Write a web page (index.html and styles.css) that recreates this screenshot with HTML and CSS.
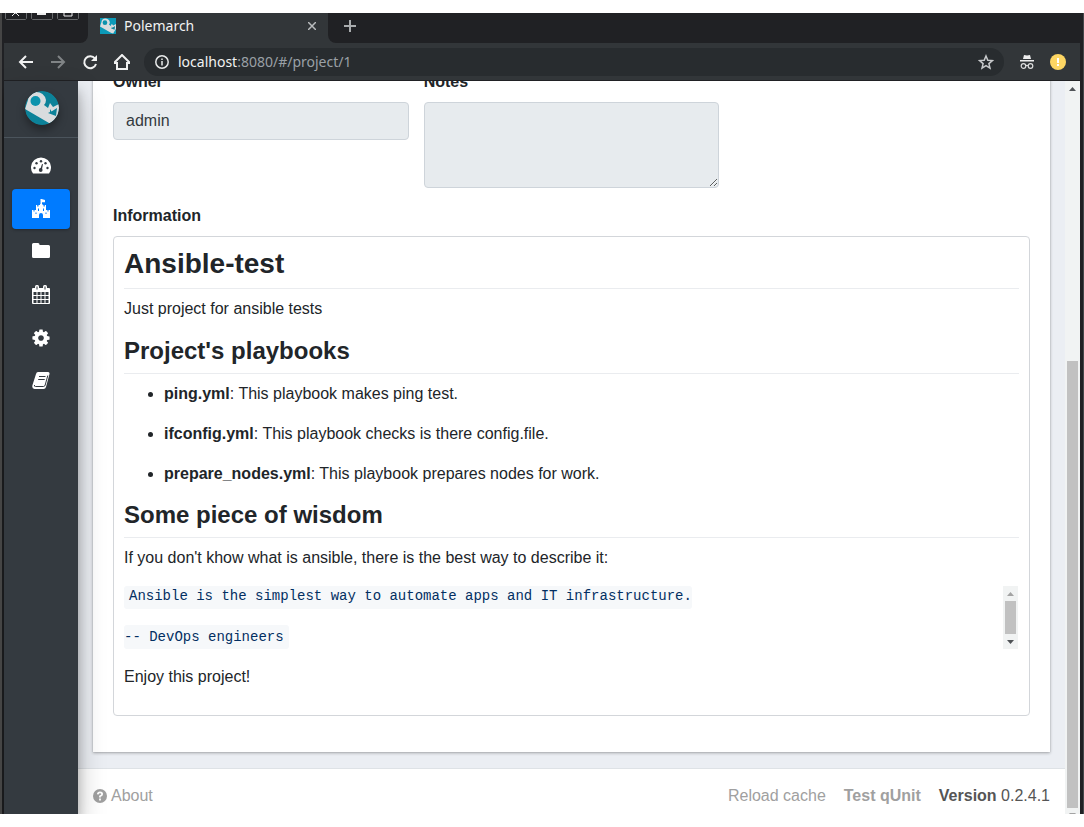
FILE: index.html
```html
<!DOCTYPE html>
<html lang="en">
<head>
<meta charset="utf-8">
<title>Polemarch</title>
<link rel="stylesheet" href="styles.css">
</head>
<body>
<svg class="defs" aria-hidden="true">
  <symbol id="logo-mark" viewBox="0 0 34 34">
    <path d="M0 18 L3 9 Q4 1 11 1 Q19 1 21 9 Q21 12 19 14 L23 17 L25 12 L28 16 L34 13 V23 L28 33 L24 32Z" fill="#d9dcde"/>
    <circle cx="10.500" cy="10" r="5" fill="#0c93ad"/>
    <path d="M25 18l1.500 2.500L32 17l-1 8-8-3 2-1z" fill="#0c8299"/>
  </symbol>
</svg>
<div class="window">
  <header class="chrome">
    <div class="tabstrip">
      <div class="controls">
        <svg width="84" height="8" viewBox="0 0 84 8" fill="none" stroke="#67696b" aria-hidden="true">
          <path d="M1.500 0v5.500l1 1h19l1-1V0M27.500 0v5.500l1 1h19l1-1V0M53.500 0v5.500l1 1h19l1-1V0"/>
          <path d="M8 3l3-3h1l3 3M60 0v3h8V0" stroke="#eee"/><path d="M33 1h9" stroke="#eee" stroke-width="2"/>
        </svg>
      </div>
      <div class="tab">
        <svg class="favicon" viewBox="0 0 34 34" aria-hidden="true"><rect width="34" height="34" fill="#0c9ab8"/><use href="#logo-mark" width="34" height="34"/></svg>
        <span class="tab-title">Polemarch</span>
        <button class="plain" aria-label="Close tab"><svg width="8" height="8" viewBox="0 0 8 8" stroke="#b9bcbe" stroke-width="1.500"><path d="M0 0l8 8M8 0L0 8"/></svg></button>
      </div>
      <button class="plain new-tab" aria-label="New tab"><svg width="12" height="12" viewBox="0 0 12 12" stroke="#a9acae" stroke-width="2"><path d="M6 0v12M0 6h12"/></svg></button>
    </div>
    <div class="toolbar">
      <button class="plain" aria-label="Back"><svg width="16" height="16" viewBox="0 0 16 16" fill="none" stroke="#f1f2f2" stroke-width="2"><path d="M15 8H2M8 2L2 8l6 6"/></svg></button>
      <button class="plain" aria-label="Forward"><svg width="16" height="16" viewBox="0 0 16 16" fill="none" stroke="#808486" stroke-width="2"><path d="M1 8h13M8 2l6 6-6 6"/></svg></button>
      <button class="plain" aria-label="Reload"><svg width="16" height="16" viewBox="0 0 16 16" fill="none" stroke="#f1f2f2" stroke-width="2"><path d="M13 4.500A6 6 0 1 0 14 10"/><path d="M15 1v6H9z" fill="#f1f2f2" stroke="none"/></svg></button>
      <button class="plain" aria-label="Home"><svg width="16" height="16" viewBox="0 0 16 16" fill="none" stroke="#f1f2f2" stroke-width="2"><path d="M0 9h3v6h10V9h3L8 1z"/></svg></button>
      <div class="address">
        <svg width="14" height="14" viewBox="0 0 14 14" fill="none" stroke="#e8eaea" stroke-width="1.500" aria-hidden="true"><circle cx="7" cy="7" r="6.200"/><path d="M7 3.500V5M7 6v4.500"/></svg>
        <span class="url"><b>localhost</b>:8080/#/project/1</span>
        <button class="plain" aria-label="Bookmark"><svg width="16" height="16" viewBox="0 0 16 16" fill="none" stroke="#c8cacc" stroke-width="1.500"><path d="M8 2l1.800 4.200 4.600.4-3.500 3 1.100 4.500-4-2.400-4 2.400 1.100-4.500-3.500-3 4.600-.4z"/></svg></button>
      </div>
      <svg class="incognito" width="14" height="16" viewBox="0 0 14 16" aria-hidden="true"><path d="M3 5l1-4 3 .6L10 1l1 4zM0 6h14v1.500H0z" fill="#eee"/><g fill="none" stroke="#ddd" stroke-width="1.200"><circle cx="3.500" cy="12" r="2.300"/><circle cx="10.500" cy="12" r="2.300"/><path d="M5.800 11.500h2.400"/></g></svg>
      <button class="plain" aria-label="Update"><svg width="16" height="16" viewBox="0 0 16 16"><circle cx="8" cy="8" r="8" fill="#fdd663"/><path d="M7 4h2v5H7zM7 10h2v2H7z" fill="#fff"/></svg></button>
    </div>
  </header>
  <div class="app">
    <nav class="sidebar">
      <a class="brand" href="#" aria-label="Polemarch home">
        <svg class="logo" width="34" height="34" viewBox="0 0 34 34"><clipPath id="disc"><circle cx="17" cy="17" r="17"/></clipPath><g clip-path="url(#disc)"><rect width="34" height="34" fill="#0c8299"/><use href="#logo-mark" width="34" height="34"/></g></svg>
      </a>
      <div class="menu">
        <a href="#" aria-label="Dashboard"><svg width="20" height="20" viewBox="0 0 20 20"><path d="M2 17.500a10 10 0 1 1 16 0z" fill="#fff"/><g fill="#343a40"><circle cx="3.500" cy="12" r="1.200"/><circle cx="5.500" cy="7.300" r="1.200"/><circle cx="10" cy="5.300" r="1.200"/><circle cx="14.500" cy="7.300" r="1.200"/><circle cx="16.500" cy="12" r="1.200"/><circle cx="9.700" cy="14" r="1.900"/><path d="M9 14l2-6 1 .3L10.800 14z"/></g></svg></a>
        <a class="active" href="#" aria-label="Projects"><svg width="20" height="20" viewBox="0 0 20 20"><path d="M1 19v-8h1.500v1.500h1V11H5V6h1.200v1.500h1.300V6H9V5h.5V0h1L14 1v2.200h-3V5h.5v1h1v1.500h1.300V6H15v5h1.500v1.500h1V11H19v8h-7v-3q0-2-2-2t-2 2v3z" fill="#fff"/><path d="M7.500 9.500v2.500M12.500 9.500v2.500M5 13.500V15M15 13.500V15" stroke="#007bff"/></svg></a>
        <a href="#" aria-label="Inventories"><svg width="18" height="20" viewBox="0 0 18 20" fill="#fff"><path d="M1.500 1H6q1.500 0 1.500 1.500V3H16.500Q18 3 18 4.500V14.500Q18 16 16.500 16H1.500Q0 16 0 14.500V2.500Q0 1 1.500 1z"/></svg></a>
        <a href="#" aria-label="Schedule"><svg width="18" height="20" viewBox="0 0 18 20"><rect y="3" width="18" height="16" rx="1" fill="#fff"/><path d="M1.500 7h3v3h-3zM5.500 7h3v3h-3zM9.500 7h3v3h-3zM13.500 7h3v3h-3zM1.500 11h3v3h-3zM5.500 11h3v3h-3zM9.500 11h3v3h-3zM13.500 11h3v3h-3zM1.500 15h3v3h-3zM5.500 15h3v3h-3zM9.500 15h3v3h-3zM13.500 15h3v3h-3z" fill="#343a40"/><rect x="3" width="4" height="6" rx="1.500" fill="#fff"/><rect x="11" width="4" height="6" rx="1.500" fill="#fff"/><path d="M5 1.500v3M13 1.500v3" stroke="#343a40"/></svg></a>
        <a href="#" aria-label="System"><svg width="20" height="20" viewBox="0 0 1792 1792" fill="#fff"><path d="M1152 896q0-106-75-181t-181-75-181 75-75 181 75 181 181 75 181-75 75-181zm512-109v222q0 12-8 23t-20 13l-185 28q-19 54-39 91 35 50 107 138 10 12 10 25t-9 23q-27 37-99 108t-94 71q-12 0-26-9l-138-108q-44 23-91 38-16 136-29 186-7 28-36 28h-222q-14 0-24.500-8.500t-11.500-21.500l-28-184q-49-16-90-37l-141 107q-10 9-25 9-14 0-25-11-126-114-165-168-7-10-7-23 0-12 8-23 15-21 51-66.500t54-70.500q-27-50-41-99l-183-27q-13-2-21-12.500t-8-23.500v-222q0-12 8-23t19-13l186-28q14-46 39-92-40-57-107-138-10-12-10-24 0-10 9-23 26-36 98.500-107.500t94.500-71.500q13 0 26 10l138 107q44-23 91-38 16-136 29-186 7-28 36-28h222q14 0 24.500 8.500t11.500 21.500l28 184q49 16 90 37l142-107q9-9 24-9 13 0 25 10 129 119 165 170 7 8 7 22 0 12-8 23-15 21-51 66.500t-54 70.500q26 50 41 98l183 28q13 2 21 12.500t8 23.500z"/></svg></a>
        <a href="#" aria-label="Documentation"><svg width="18" height="18" viewBox="0 0 18 18"><path d="M6 0h9.500q2.500 0 2 2l-3.500 13q-.5 2-2.500 2H2.500Q-.5 16.500.5 13L4 2q.5-2 2-2z" fill="#fff"/><g fill="none" stroke="#343a40"><path d="M7 4.500h6.500M6.200 7.500h6.500M2.500 13q-.5 1.500 1 1.500h8q1.300 0 1.700-1.500L15.800 3.500"/></g></svg></a>
      </div>
    </nav>
    <div class="page">
      <main class="card">
        <form class="fields">
          <div class="field"><label for="owner">Owner</label><input id="owner" value="admin" readonly></div>
          <div class="field"><label for="notes">Notes</label><textarea id="notes" readonly></textarea></div>
        </form>
        <h3 class="section-label">Information</h3>
        <article class="readme">
          <h1>Ansible-test</h1>
          <p>Just project for ansible tests</p>
          <h2>Project's playbooks</h2>
          <ul>
            <li><b>ping.yml</b>: This playbook makes ping test.</li>
            <li><b>ifconfig.yml</b>: This playbook checks is there config.file.</li>
            <li><b>prepare_nodes.yml</b>: This playbook prepares nodes for work.</li>
          </ul>
          <h2>Some piece of wisdom</h2>
          <p>If you don't khow what is ansible, there is the best way to describe it:</p>
          <div class="quote">
            <div class="quote-lines">
              <code class="first">Ansible is the simplest way to automate apps and IT infrastructure.</code>
              <code>-- DevOps engineers</code>
            </div>
            <div class="scroll small" aria-hidden="true"><i class="up"></i><span class="thumb"></span><i class="down"></i></div>
          </div>
          <p>Enjoy this project!</p>
        </article>
      </main>
      <footer class="footer">
        <a class="about" href="#"><svg width="14" height="14" viewBox="0 0 14 14" aria-hidden="true"><circle cx="7" cy="7" r="7" fill="#a0a0a0"/><path d="M4.800 5.300Q5 3.400 7 3.400t2.200 1.700Q9.200 6.300 7 7.300V8.500M7 9.500v2" fill="none" stroke="#fff" stroke-width="1.800"/></svg>About</a>
        <a href="#">Reload cache</a>
        <a href="#"><b>Test qUnit</b></a>
        <span><b>Version</b> 0.2.4.1</span>
      </footer>
    </div>
    <div class="scroll main-scroll" aria-hidden="true"><i class="up"></i><span class="thumb"></span><i class="down"></i></div>
  </div>
</div>
</body>
</html>
```
FILE: styles.css
```css
* { box-sizing: border-box; }
body {
  margin: 0;
  padding: 13px 0;
  height: 100vh;
  background: #fff;
  color: #212529;
  font: 16px/24px "Liberation Sans", Arial, sans-serif;
}
a { color: inherit; text-decoration: none; }
svg { display: block; flex: none; }
.defs { position: absolute; width: 0; height: 0; }
.plain { display: block; flex: none; border: 0; padding: 0; background: none; }

.window {
  height: 100%;
  display: flex;
  flex-direction: column;
  background: #202124;
  border-left: 2px solid #454545;
  border-right: 1px solid #45484b;
  padding: 0 3px 0 2px;
  overflow: hidden;
}
.chrome { font-family: "Noto Sans", "Open Sans", sans-serif; font-size: 14px; flex: none; }
.tabstrip { display: flex; height: 30px; background: linear-gradient(to right, #323639 50%, #202124 50%); }
.controls { width: 84px; background: #202124; border-bottom-right-radius: 8px; }
.tab {
  display: flex;
  align-items: center;
  width: 240px;
  padding: 0 12px 4px;
  gap: 8px;
  background: #323639;
  color: #f1f2f2;
}
.tab-title { flex: 1; line-height: 20px; }
.favicon { width: 16px; height: 16px; }
.new-tab { flex: 1; padding: 0 16px 4px; background: #202124; border-bottom-left-radius: 8px; }
.toolbar {
  display: flex;
  align-items: center;
  gap: 16px;
  height: 38px;
  padding: 0 14px;
  background: #323639;
  border-bottom: 1px solid #202124;
}
.address {
  flex: 1;
  display: flex;
  align-items: center;
  gap: 9px;
  height: 28px;
  margin-left: -2px;
  padding: 0 10px 0 11px;
  border-radius: 14px;
  background: #282c2f;
  color: #9aa0a6;
}
.url { flex: 1; }
.url b { font-weight: 400; color: #f1f2f2; }

.app { flex: 1; min-height: 0; display: flex; }
.sidebar {
  width: 74px;
  flex: none;
  background: #343a40;
  box-shadow: 0 14px 28px rgba(0, 0, 0, .25), 0 10px 10px rgba(0, 0, 0, .22);
  z-index: 1;
}
.brand { display: flex; justify-content: center; height: 57px; padding: 10px 0 0 2px; border-bottom: 1px solid #4b545c; }
.logo { border-radius: 50%; box-shadow: 0 5px 8px rgba(0, 0, 0, .35); }
.menu { display: flex; flex-direction: column; gap: 3px; padding: 8px; }
.menu a { display: flex; align-items: center; justify-content: center; height: 40px; padding-bottom: 1px; border-radius: 4px; }
.menu .active { background: #007bff; box-shadow: 0 1px 3px rgba(0, 0, 0, .3); }

.page { flex: 1; min-width: 0; display: flex; flex-direction: column; overflow: hidden; background: #ebeef3; }
.card {
  margin: -11px 15px 16px;
  padding: 0 20px 36px;
  background: #fff;
  box-shadow: 0 0 1px rgba(0, 0, 0, .2), 0 1px 3px rgba(0, 0, 0, .3);
}
.fields { display: grid; grid-template-columns: repeat(3, 1fr); gap: 15px; }
.field label, .section-label { display: block; margin: 0 0 8px; font-size: 16px; font-weight: 700; }
.field input, .field textarea {
  display: block;
  width: 100%;
  height: 38px;
  padding: 6px 12px;
  border: 1px solid #ced4da;
  border-radius: 4px;
  background: #e7ebee;
  color: #343a40;
  font: inherit;
}
.field textarea { height: 86px; }
.section-label { margin-top: 16px; }
.readme { padding: 10px; border: 1px solid #d3d6da; border-radius: 4px; }
.readme h1, .readme h2 { margin: 0 0 8px; border-bottom: 1px solid #eaecef; }
.readme h1 { font-size: 28px; line-height: 34px; padding-bottom: 7px; }
.readme h2 { font-size: 24px; line-height: 28px; padding-bottom: 8px; }
.readme p { margin: 0 0 16px; }
.readme ul { display: grid; gap: 16px; margin: 0 0 15px; padding-left: 40px; }
.quote { display: flex; justify-content: space-between; margin-bottom: 16px; padding-right: 1px; }
.quote-lines { display: flex; flex-direction: column; align-items: flex-start; gap: 16px; }
.quote code {
  padding: 2px 5px 2px 0;
  border-radius: 3px;
  background: #f6f8fa;
  color: #032f62;
  font: 14px/20px "Liberation Mono", monospace;
}
.quote .first { padding: 0 0 3px 5px; }

.scroll { display: flex; flex-direction: column; align-items: center; width: 15px; flex: none; background: #f1f3f3; }
.thumb { width: 11px; background: #c1c1c1; }
.scroll i { width: 7px; height: 4px; margin: 6px 0 5px; background: #505357; }
.up { clip-path: polygon(50% 0, 100% 100%, 0 100%); }
.down { clip-path: polygon(0 0, 100% 0, 50% 100%); }
.small .thumb { flex: 1; }
.small .up { background: #a3a3a3; }
.main-scroll { justify-content: space-between; }
.main-scroll .thumb { height: 61%; margin-top: auto; }
.main-scroll .down { margin: 5px 0 -3px; background: #a3a3a3; }

.footer {
  flex: 1;
  display: flex;
  align-items: center;
  gap: 18px;
  padding: 8px 15px 0;
  border-top: 1px solid #dee2e6;
  background: #fff;
  color: #a0a0a0;
}
.footer span { color: #555; }
.about { display: flex; align-items: center; gap: 4px; margin-right: auto; }
```
